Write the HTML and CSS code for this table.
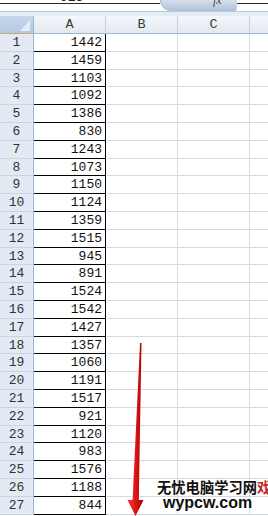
FILE: index.html
```html
<!DOCTYPE html>
<html>
<head>
<meta charset="utf-8">
<link rel="stylesheet" href="styles.css">
</head>
<body>
<div class="app">
  <div class="fbar">
    <div class="namebox"><span class="name">J13</span></div>
    <div class="fx"><span class="fxt">fx</span></div>
    <div class="formula"></div>
  </div>
  <div class="strip"></div>
  <div class="sheet">
    <div class="row head">
      <div class="corner"><span class="tri"></span></div>
      <div class="ch">A</div><div class="ch">B</div><div class="ch">C</div><div class="ch last"></div>
    </div>
    <div class="row"><div class="rh">1</div><div class="a">1442</div><div class="c"></div><div class="c"></div><div class="c last"></div></div>
    <div class="row"><div class="rh">2</div><div class="a">1459</div><div class="c"></div><div class="c"></div><div class="c last"></div></div>
    <div class="row"><div class="rh">3</div><div class="a">1103</div><div class="c"></div><div class="c"></div><div class="c last"></div></div>
    <div class="row"><div class="rh">4</div><div class="a">1092</div><div class="c"></div><div class="c"></div><div class="c last"></div></div>
    <div class="row"><div class="rh">5</div><div class="a">1386</div><div class="c"></div><div class="c"></div><div class="c last"></div></div>
    <div class="row"><div class="rh">6</div><div class="a">830</div><div class="c"></div><div class="c"></div><div class="c last"></div></div>
    <div class="row"><div class="rh">7</div><div class="a">1243</div><div class="c"></div><div class="c"></div><div class="c last"></div></div>
    <div class="row"><div class="rh">8</div><div class="a">1073</div><div class="c"></div><div class="c"></div><div class="c last"></div></div>
    <div class="row"><div class="rh">9</div><div class="a">1150</div><div class="c"></div><div class="c"></div><div class="c last"></div></div>
    <div class="row"><div class="rh">10</div><div class="a">1124</div><div class="c"></div><div class="c"></div><div class="c last"></div></div>
    <div class="row"><div class="rh">11</div><div class="a">1359</div><div class="c"></div><div class="c"></div><div class="c last"></div></div>
    <div class="row"><div class="rh">12</div><div class="a">1515</div><div class="c"></div><div class="c"></div><div class="c last"></div></div>
    <div class="row"><div class="rh">13</div><div class="a">945</div><div class="c"></div><div class="c"></div><div class="c last"></div></div>
    <div class="row"><div class="rh">14</div><div class="a">891</div><div class="c"></div><div class="c"></div><div class="c last"></div></div>
    <div class="row"><div class="rh">15</div><div class="a">1524</div><div class="c"></div><div class="c"></div><div class="c last"></div></div>
    <div class="row"><div class="rh">16</div><div class="a">1542</div><div class="c"></div><div class="c"></div><div class="c last"></div></div>
    <div class="row"><div class="rh">17</div><div class="a">1427</div><div class="c"></div><div class="c"></div><div class="c last"></div></div>
    <div class="row"><div class="rh">18</div><div class="a">1357</div><div class="c"></div><div class="c"></div><div class="c last"></div></div>
    <div class="row"><div class="rh">19</div><div class="a">1060</div><div class="c"></div><div class="c"></div><div class="c last"></div></div>
    <div class="row"><div class="rh">20</div><div class="a">1191</div><div class="c"></div><div class="c"></div><div class="c last"></div></div>
    <div class="row"><div class="rh">21</div><div class="a">1517</div><div class="c"></div><div class="c"></div><div class="c last"></div></div>
    <div class="row"><div class="rh">22</div><div class="a">921</div><div class="c"></div><div class="c"></div><div class="c last"></div></div>
    <div class="row"><div class="rh">23</div><div class="a">1120</div><div class="c"></div><div class="c"></div><div class="c last"></div></div>
    <div class="row"><div class="rh">24</div><div class="a">983</div><div class="c"></div><div class="c"></div><div class="c last"></div></div>
    <div class="row"><div class="rh">25</div><div class="a">1576</div><div class="c"></div><div class="c"></div><div class="c last"></div></div>
    <div class="row"><div class="rh">26</div><div class="a">1188</div><div class="c"></div><div class="c"></div><div class="c last"></div></div>
    <div class="row"><div class="rh">27</div><div class="a">844</div><div class="c"></div><div class="c"></div><div class="c last"></div></div>
  </div>
  <svg class="arrow" width="30" height="180" viewBox="0 0 30 180">
    <defs>
      <linearGradient id="rg" x1="0" y1="0" x2="1" y2="0">
        <stop offset="0" stop-color="#f23a3a"/>
        <stop offset="0.5" stop-color="#e01414"/>
        <stop offset="1" stop-color="#a80000"/>
      </linearGradient>
    </defs>
    <polygon points="15,3 16.5,3 13.8,160 18.5,160 10.5,176 2.5,160 7.6,160" fill="url(#rg)"/>
  </svg>
  <div class="mark">
    <div class="mark-cn">无忧电脑学习网<span class="red">戏</span></div>
    <div class="mark-en">wypcw.com</div>
  </div>
</div>
</body>
</html>
```

FILE: styles.css
```css
html, body {
  margin: 0;
  padding: 0;
  background: #ffffff;
  overflow: hidden;
}
.app {
  position: relative;
  width: 268px;
  height: 516px;
  overflow: hidden;
  font-family: "Liberation Mono", "DejaVu Sans Mono", monospace;
}
.fbar {
  display: flex;
  height: 11px;
  background: #ffffff;
}
.namebox {
  width: 160px;
  height: 3px;
  border-bottom: 1px solid #2a2a2a;
  overflow: hidden;
  position: relative;
}
.name {
  display: block;
  margin-left: 60px;
  margin-top: -8px;
  font-size: 13px;
  line-height: 11px;
  color: #222;
}
.fx {
  width: 77px;
  height: 11px;
  border-radius: 0 0 4px 16px;
  background: linear-gradient(to bottom, #d6dfeb, #b0c0d6);
  border-left: 1px solid #aab8cc;
  box-sizing: border-box;
  overflow: hidden;
  position: relative;
}
.fxt {
  display: block;
  margin-left: 52px;
  margin-top: -5px;
  font-family: "Liberation Serif", serif;
  font-style: italic;
  font-size: 12px;
  line-height: 11px;
  color: #3c4a60;
}
.formula {
  flex: 1;
  height: 3px;
  border-bottom: 1px solid #2a2a2a;
}
.strip {
  height: 4px;
  border-top: 1px solid #b9c9dd;
  background: #e6ecf4;
}
.sheet {
  display: flex;
  flex-direction: column;
}
.row {
  display: flex;
  height: 17.8px;
}
.row.head {
  height: 18px;
}
.corner {
  width: 34px;
  flex: none;
  box-sizing: border-box;
  background: linear-gradient(to bottom, #c8d8ec, #b3c8e2);
  border-right: 1px solid #9eb6ce;
  border-bottom: 1px solid #c7a676;
  position: relative;
}
.tri {
  position: absolute;
  right: 3px;
  bottom: 2px;
  width: 0;
  height: 0;
  border-left: 10px solid transparent;
  border-bottom: 11px solid #e6edf7;
}
.ch {
  width: 72px;
  flex: none;
  box-sizing: border-box;
  background: linear-gradient(to bottom, #f5f8fb, #e2e8f0);
  border-right: 1px solid #c5d0de;
  border-bottom: 1px solid #9eb6ce;
  text-align: center;
  font-size: 13.5px;
  line-height: 18px;
  color: #3a3a3a;
}
.rh {
  width: 34px;
  flex: none;
  box-sizing: border-box;
  background: #e3eaf4;
  border-right: 1px solid #9eb6ce;
  border-bottom: 1px solid #c8d5e5;
  text-align: center;
  font-size: 13px;
  line-height: 18px;
  color: #333;
}
.a {
  width: 72px;
  flex: none;
  box-sizing: border-box;
  background: #ffffff;
  border-right: 1px solid #000000;
  border-bottom: 1px solid #000000;
  text-align: right;
  padding-right: 3px;
  font-size: 13px;
  line-height: 18px;
  color: #111;
}
.c {
  width: 72px;
  flex: none;
  box-sizing: border-box;
  border-right: 1px solid #d4dae3;
  border-bottom: 1px solid #d4dae3;
}
.last {
  flex: 1;
  width: auto;
  border-right: none;
}
.arrow {
  position: absolute;
  left: 125px;
  top: 340px;
}
.mark {
  position: absolute;
  left: 157px;
  top: 478px;
  width: 120px;
}
.mark-cn {
  font-family: "Noto Sans CJK SC", sans-serif;
  font-weight: bold;
  font-size: 14.3px;
  line-height: 17px;
  color: #111;
  white-space: nowrap;
}
.red {
  color: #c0282c;
}
.mark-en {
  margin-left: 6px;
  font-family: "Liberation Sans", Arial, sans-serif;
  font-weight: bold;
  font-size: 16px;
  line-height: 15px;
  color: #111;
  white-space: nowrap;
}
```
